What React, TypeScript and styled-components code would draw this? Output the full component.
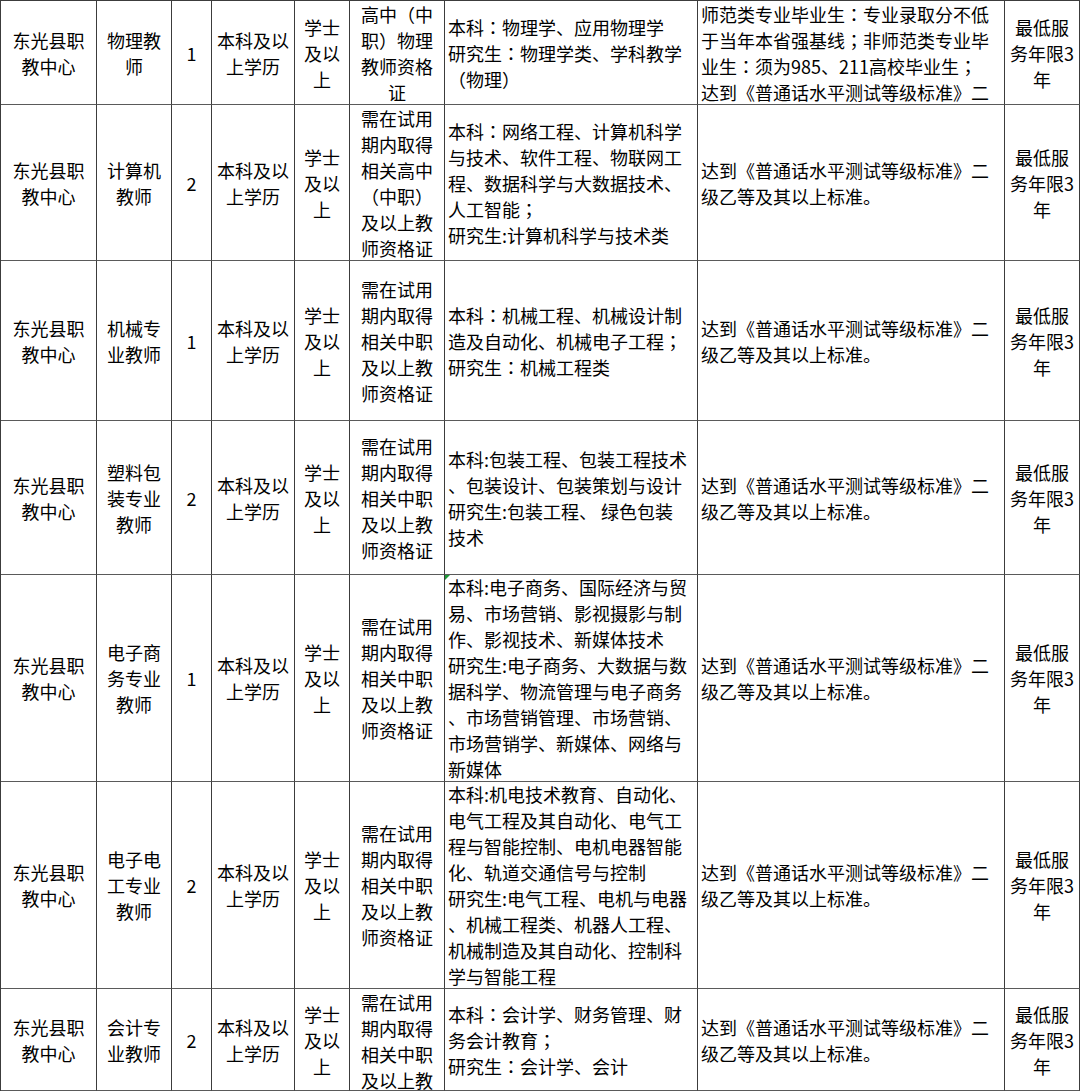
import React from "react";
import styled, { createGlobalStyle } from "styled-components";

const GlobalStyle = createGlobalStyle`
  html, body {
    margin: 0;
    padding: 0;
    background: #fff;
  }
  body {
    font-family: "Noto Sans CJK SC", "Noto Sans", sans-serif;
    color: #000;
  }
`;

// column widths (first one loses 1px to the sheet's left border)
const COLS = [96, 75, 40, 83, 55, 95, 253, 307, 75];

type Row = {
  h: number;
  post: string[];
  count: string;
  cert: string[];
  major: string[];
  other?: string[];
  flag?: boolean;
  certTop?: boolean;
};

const UNIT = ["东光县职", "教中心"];
const EDU = ["本科及以", "上学历"];
const DEGREE = ["学士", "及以", "上"];
const CERT = ["需在试用", "期内取得", "相关中职", "及以上教", "师资格证"];
const PUTONGHUA = ["达到《普通话水平测试等级标准》二", "级乙等及其以上标准。"];
const SERVICE = ["最低服", "务年限3", "年"];

const rows: Row[] = [
  {
    h: 104,
    post: ["物理教", "师"],
    count: "1",
    cert: ["高中（中", "职）物理", "教师资格", "证"],
    major: ["本科：物理学、应用物理学", "研究生：物理学类、学科教学", "（物理）"],
    other: [
      "师范类专业毕业生：专业录取分不低",
      "于当年本省强基线；非师范类专业毕",
      "业生：须为985、211高校毕业生；",
      "达到《普通话水平测试等级标准》二",
    ],
  },
  {
    h: 156,
    post: ["计算机", "教师"],
    count: "2",
    cert: ["需在试用", "期内取得", "相关高中", "（中职）", "及以上教", "师资格证"],
    major: [
      "本科：网络工程、计算机科学",
      "与技术、软件工程、物联网工",
      "程、数据科学与大数据技术、",
      "人工智能；",
      "研究生:计算机科学与技术类",
    ],
  },
  {
    h: 160,
    post: ["机械专", "业教师"],
    count: "1",
    cert: CERT,
    major: ["本科：机械工程、机械设计制", "造及自动化、机械电子工程；", "研究生：机械工程类"],
  },
  {
    h: 154,
    post: ["塑料包", "装专业", "教师"],
    count: "2",
    cert: CERT,
    major: [
      "本科:包装工程、包装工程技术",
      "、包装设计、包装策划与设计",
      "研究生:包装工程、 绿色包装",
      "技术",
    ],
  },
  {
    h: 207,
    post: ["电子商", "务专业", "教师"],
    count: "1",
    cert: CERT,
    flag: true,
    major: [
      "本科:电子商务、国际经济与贸",
      "易、市场营销、影视摄影与制",
      "作、影视技术、新媒体技术",
      "研究生:电子商务、大数据与数",
      "据科学、物流管理与电子商务",
      "、市场营销管理、市场营销、",
      "市场营销学、新媒体、网络与",
      "新媒体",
    ],
  },
  {
    h: 207,
    post: ["电子电", "工专业", "教师"],
    count: "2",
    cert: CERT,
    major: [
      "本科:机电技术教育、自动化、",
      "电气工程及其自动化、电气工",
      "程与智能控制、电机电器智能",
      "化、轨道交通信号与控制",
      "研究生:电气工程、电机与电器",
      "、机械工程类、机器人工程、",
      "机械制造及其自动化、控制科",
      "学与智能工程",
    ],
  },
  {
    h: 102,
    post: ["会计专", "业教师"],
    count: "2",
    cert: CERT,
    certTop: true,
    major: ["本科：会计学、财务管理、财", "务会计教育；", "研究生：会计学、会计"],
  },
];

const Sheet = styled.div<{ $rows: string }>`
  display: grid;
  grid-template-columns: ${COLS.map((c) => c + "px").join(" ")};
  grid-template-rows: ${(p) => p.$rows};
  width: 1080px;
  height: 1091px;
  box-sizing: border-box;
  border-top: 1px solid #3c3c3c;
  border-left: 1px solid #3c3c3c;
  overflow: hidden;
  background: #fff;
`;

const Cell = styled.div<{ $left?: boolean; $top?: boolean; $flag?: boolean }>`
  position: relative;
  display: flex;
  flex-direction: column;
  justify-content: ${(p) => (p.$top ? "flex-start" : "center")};
  align-items: ${(p) => (p.$left ? "flex-start" : "center")};
  text-align: ${(p) => (p.$left ? "left" : "center")};
  padding: ${(p) => (p.$left ? "0 2px 0 3px" : "0 2px")};
  box-sizing: border-box;
  border-right: 1px solid #3c3c3c;
  border-bottom: 1px solid #5a5a5a;
  font-size: 18px;
  line-height: 26px;
  white-space: nowrap;
  overflow: hidden;
  min-height: 0;

  ${(p) =>
    p.$flag &&
    `
    &::before {
      content: "";
      position: absolute;
      left: 0;
      top: 0;
      border-top: 5px solid #1f9a3a;
      border-right: 5px solid transparent;
    }
  `}
`;

const Line = styled.span`
  display: block;
`;

// full-width colon / semicolon sit centred in the source font
const Punct = styled.span`
  font-family: "Noto Sans CJK TC", "Noto Sans CJK SC", sans-serif;
`;

const renderText = (t: string) =>
  t.split(/([：；])/).map((part, i) =>
    part === "：" || part === "；" ? <Punct key={i}>{part}</Punct> : part
  );

const Lines = ({ items }: { items: string[] }) => (
  <>
    {items.map((t, i) => (
      <Line key={i}>{renderText(t)}</Line>
    ))}
  </>
);

export default function App() {
  return (
    <>
      <GlobalStyle />
      <Sheet $rows={rows.map((r) => r.h + "px").join(" ")}>
        {rows.map((r, i) => (
          <React.Fragment key={i}>
            <Cell>
              <Lines items={UNIT} />
            </Cell>
            <Cell>
              <Lines items={r.post} />
            </Cell>
            <Cell>{r.count}</Cell>
            <Cell>
              <Lines items={EDU} />
            </Cell>
            <Cell>
              <Lines items={DEGREE} />
            </Cell>
            <Cell $top={r.certTop}>
              <Lines items={r.cert} />
            </Cell>
            <Cell $left $flag={r.flag}>
              <Lines items={r.major} />
            </Cell>
            <Cell $left>
              <Lines items={r.other ?? PUTONGHUA} />
            </Cell>
            <Cell>
              <Lines items={SERVICE} />
            </Cell>
          </React.Fragment>
        ))}
      </Sheet>
    </>
  );
}
